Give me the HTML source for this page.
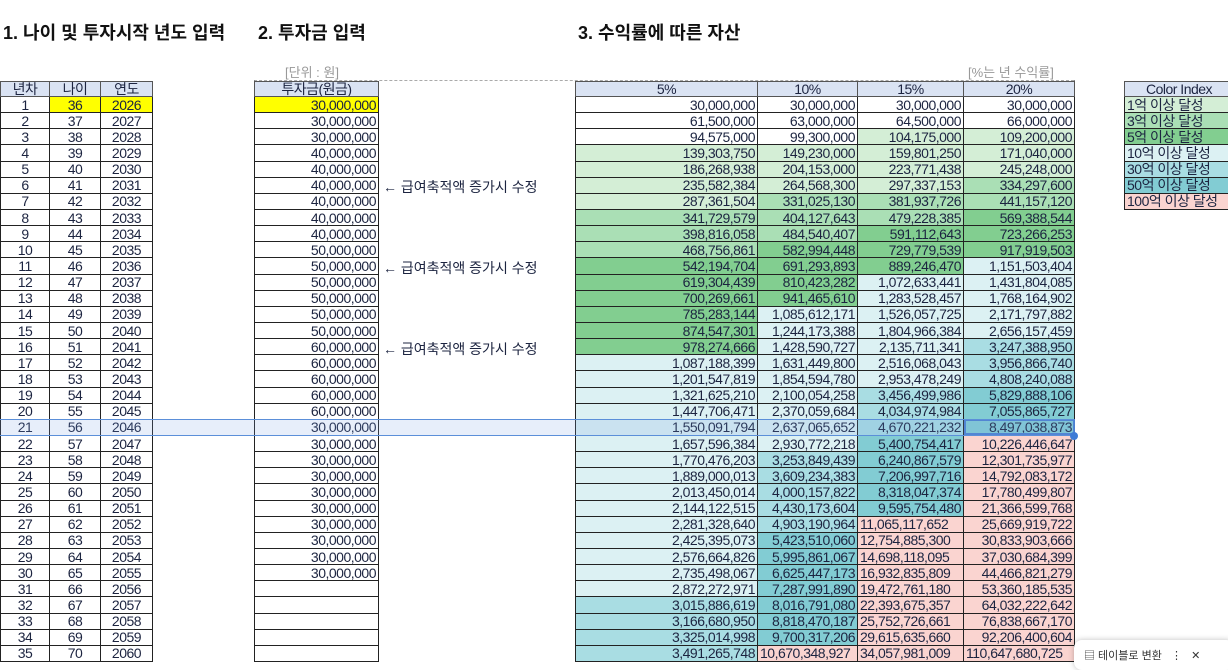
<!DOCTYPE html>
<html><head><meta charset="utf-8"><style>
*{margin:0;padding:0;box-sizing:border-box}
body{width:1228px;height:660px;overflow:hidden;background:#fff;font-family:"Liberation Sans","Noto Sans CJK KR",sans-serif;color:#1c2440;position:relative}
.t{position:absolute;font-weight:bold;font-size:18px;top:19px;color:#111;white-space:nowrap;overflow:hidden}
.u{position:absolute;top:62px;font-size:13px;color:#999}
table{position:absolute;border-collapse:collapse;table-layout:fixed;font-size:14px;letter-spacing:-0.5px}
td{border:1px solid #222;height:16.15px;line-height:14px;padding:0 2px;white-space:nowrap;overflow:hidden;text-align:right}
tr.h td{height:15px;background:#dae3f3;text-align:center;border-color:#555}
.c td{text-align:center}
.y{background:#ffff00}
.g1{background:#d4eed6}.g2{background:#aadfb5}.g3{background:#82ce90}
.c1{background:#dcf1f3}.c2{background:#a9dde3}.c3{background:#82ccd3}.p{background:#fad4d0}
.l{text-align:left}
.note{position:absolute;left:383px;font-size:14px;white-space:nowrap}
.sel{position:absolute;left:0;width:1074px;top:419px;height:17px;border-top:1px solid #5b8fd9;border-bottom:1px solid #5b8fd9;background:rgba(120,160,230,0.18)}
</style></head><body>
<div class="t" style="left:3px;width:252px">1. 나이 및 투자시작 년도 입력</div>
<div class="t" style="left:258px">2. 투자금 입력</div>
<div class="t" style="left:578px">3. 수익률에 따른 자산</div>
<div class="u" style="left:285px">[단위 : 원]</div>
<div class="u" style="left:968px">[%는 년 수익률]</div>
<div style="position:absolute;left:254px;top:80px;width:820px;border-top:1px dashed #aaa"></div>
<div style="position:absolute;left:254px;top:80px;height:580px;border-left:1px dashed #888"></div>
<div style="position:absolute;left:1074px;top:80px;height:580px;border-left:1px dashed #888"></div>

<table class="c" style="left:0;top:81px;width:152px"><colgroup><col style="width:49px"><col style="width:51px"><col style="width:52px"></colgroup>
<tr class="h"><td>년차</td><td>나이</td><td>연도</td></tr>
<tr><td>1</td><td class="y">36</td><td class="y">2026</td></tr>
<tr><td>2</td><td>37</td><td>2027</td></tr><tr><td>3</td><td>38</td><td>2028</td></tr><tr><td>4</td><td>39</td><td>2029</td></tr><tr><td>5</td><td>40</td><td>2030</td></tr><tr><td>6</td><td>41</td><td>2031</td></tr><tr><td>7</td><td>42</td><td>2032</td></tr><tr><td>8</td><td>43</td><td>2033</td></tr><tr><td>9</td><td>44</td><td>2034</td></tr><tr><td>10</td><td>45</td><td>2035</td></tr><tr><td>11</td><td>46</td><td>2036</td></tr><tr><td>12</td><td>47</td><td>2037</td></tr><tr><td>13</td><td>48</td><td>2038</td></tr><tr><td>14</td><td>49</td><td>2039</td></tr><tr><td>15</td><td>50</td><td>2040</td></tr><tr><td>16</td><td>51</td><td>2041</td></tr><tr><td>17</td><td>52</td><td>2042</td></tr><tr><td>18</td><td>53</td><td>2043</td></tr><tr><td>19</td><td>54</td><td>2044</td></tr><tr><td>20</td><td>55</td><td>2045</td></tr><tr><td>21</td><td>56</td><td>2046</td></tr><tr><td>22</td><td>57</td><td>2047</td></tr><tr><td>23</td><td>58</td><td>2048</td></tr><tr><td>24</td><td>59</td><td>2049</td></tr><tr><td>25</td><td>60</td><td>2050</td></tr><tr><td>26</td><td>61</td><td>2051</td></tr><tr><td>27</td><td>62</td><td>2052</td></tr><tr><td>28</td><td>63</td><td>2053</td></tr><tr><td>29</td><td>64</td><td>2054</td></tr><tr><td>30</td><td>65</td><td>2055</td></tr><tr><td>31</td><td>66</td><td>2056</td></tr><tr><td>32</td><td>67</td><td>2057</td></tr><tr><td>33</td><td>68</td><td>2058</td></tr><tr><td>34</td><td>69</td><td>2059</td></tr><tr><td>35</td><td>70</td><td>2060</td></tr>
</table>

<table style="left:254px;top:81px;width:125px">
<tr class="h"><td>투자금(원금)</td></tr>
<tr><td class="y">30,000,000</td></tr><tr><td>30,000,000</td></tr><tr><td>30,000,000</td></tr>
<tr><td>40,000,000</td></tr><tr><td>40,000,000</td></tr><tr><td>40,000,000</td></tr><tr><td>40,000,000</td></tr><tr><td>40,000,000</td></tr><tr><td>40,000,000</td></tr>
<tr><td>50,000,000</td></tr><tr><td>50,000,000</td></tr><tr><td>50,000,000</td></tr><tr><td>50,000,000</td></tr><tr><td>50,000,000</td></tr><tr><td>50,000,000</td></tr>
<tr><td>60,000,000</td></tr><tr><td>60,000,000</td></tr><tr><td>60,000,000</td></tr><tr><td>60,000,000</td></tr><tr><td>60,000,000</td></tr>
<tr><td>30,000,000</td></tr><tr><td>30,000,000</td></tr><tr><td>30,000,000</td></tr><tr><td>30,000,000</td></tr><tr><td>30,000,000</td></tr><tr><td>30,000,000</td></tr><tr><td>30,000,000</td></tr><tr><td>30,000,000</td></tr><tr><td>30,000,000</td></tr><tr><td>30,000,000</td></tr>
<tr><td>&nbsp;</td></tr><tr><td>&nbsp;</td></tr><tr><td>&nbsp;</td></tr><tr><td>&nbsp;</td></tr><tr><td>&nbsp;</td></tr>
</table>
<div class="note" style="top:177px">← 급여축적액 증가시 수정</div>
<div class="note" style="top:258px">← 급여축적액 증가시 수정</div>
<div class="note" style="top:339px">← 급여축적액 증가시 수정</div>

<table style="left:575px;top:81px;width:499px"><colgroup><col style="width:182px"><col style="width:100px"><col style="width:106px"><col style="width:111px"></colgroup>
<tr class="h"><td>5%</td><td>10%</td><td>15%</td><td>20%</td></tr>
<tr><td>30,000,000</td><td>30,000,000</td><td>30,000,000</td><td>30,000,000</td></tr>
<tr><td>61,500,000</td><td>63,000,000</td><td>64,500,000</td><td>66,000,000</td></tr>
<tr><td>94,575,000</td><td>99,300,000</td><td class="g1">104,175,000</td><td class="g1">109,200,000</td></tr>
<tr><td class="g1">139,303,750</td><td class="g1">149,230,000</td><td class="g1">159,801,250</td><td class="g1">171,040,000</td></tr>
<tr><td class="g1">186,268,938</td><td class="g1">204,153,000</td><td class="g1">223,771,438</td><td class="g1">245,248,000</td></tr>
<tr><td class="g1">235,582,384</td><td class="g1">264,568,300</td><td class="g1">297,337,153</td><td class="g2">334,297,600</td></tr>
<tr><td class="g1">287,361,504</td><td class="g2">331,025,130</td><td class="g2">381,937,726</td><td class="g2">441,157,120</td></tr>
<tr><td class="g2">341,729,579</td><td class="g2">404,127,643</td><td class="g2">479,228,385</td><td class="g3">569,388,544</td></tr>
<tr><td class="g2">398,816,058</td><td class="g2">484,540,407</td><td class="g3">591,112,643</td><td class="g3">723,266,253</td></tr>
<tr><td class="g2">468,756,861</td><td class="g3">582,994,448</td><td class="g3">729,779,539</td><td class="g3">917,919,503</td></tr>
<tr><td class="g3">542,194,704</td><td class="g3">691,293,893</td><td class="g3">889,246,470</td><td class="c1">1,151,503,404</td></tr>
<tr><td class="g3">619,304,439</td><td class="g3">810,423,282</td><td class="c1">1,072,633,441</td><td class="c1">1,431,804,085</td></tr>
<tr><td class="g3">700,269,661</td><td class="g3">941,465,610</td><td class="c1">1,283,528,457</td><td class="c1">1,768,164,902</td></tr>
<tr><td class="g3">785,283,144</td><td class="c1">1,085,612,171</td><td class="c1">1,526,057,725</td><td class="c1">2,171,797,882</td></tr>
<tr><td class="g3">874,547,301</td><td class="c1">1,244,173,388</td><td class="c1">1,804,966,384</td><td class="c1">2,656,157,459</td></tr>
<tr><td class="g3">978,274,666</td><td class="c1">1,428,590,727</td><td class="c1">2,135,711,341</td><td class="c2">3,247,388,950</td></tr>
<tr><td class="c1">1,087,188,399</td><td class="c1">1,631,449,800</td><td class="c1">2,516,068,043</td><td class="c2">3,956,866,740</td></tr>
<tr><td class="c1">1,201,547,819</td><td class="c1">1,854,594,780</td><td class="c1">2,953,478,249</td><td class="c2">4,808,240,088</td></tr>
<tr><td class="c1">1,321,625,210</td><td class="c1">2,100,054,258</td><td class="c2">3,456,499,986</td><td class="c3">5,829,888,106</td></tr>
<tr><td class="c1">1,447,706,471</td><td class="c1">2,370,059,684</td><td class="c2">4,034,974,984</td><td class="c3">7,055,865,727</td></tr>
<tr><td class="c1">1,550,091,794</td><td class="c1">2,637,065,652</td><td class="c2">4,670,221,232</td><td class="c3" style="outline:2px solid #4a7fd0;outline-offset:-2px">8,497,038,873</td></tr>
<tr><td class="c1">1,657,596,384</td><td class="c1">2,930,772,218</td><td class="c3">5,400,754,417</td><td class="p">10,226,446,647</td></tr>
<tr><td class="c1">1,770,476,203</td><td class="c2">3,253,849,439</td><td class="c3">6,240,867,579</td><td class="p">12,301,735,977</td></tr>
<tr><td class="c1">1,889,000,013</td><td class="c2">3,609,234,383</td><td class="c3">7,206,997,716</td><td class="p">14,792,083,172</td></tr>
<tr><td class="c1">2,013,450,014</td><td class="c2">4,000,157,822</td><td class="c3">8,318,047,374</td><td class="p">17,780,499,807</td></tr>
<tr><td class="c1">2,144,122,515</td><td class="c2">4,430,173,604</td><td class="c3">9,595,754,480</td><td class="p">21,366,599,768</td></tr>
<tr><td class="c1">2,281,328,640</td><td class="c2">4,903,190,964</td><td class="p l">11,065,117,652</td><td class="p">25,669,919,722</td></tr>
<tr><td class="c1">2,425,395,073</td><td class="c3">5,423,510,060</td><td class="p l">12,754,885,300</td><td class="p">30,833,903,666</td></tr>
<tr><td class="c1">2,576,664,826</td><td class="c3">5,995,861,067</td><td class="p l">14,698,118,095</td><td class="p">37,030,684,399</td></tr>
<tr><td class="c1">2,735,498,067</td><td class="c3">6,625,447,173</td><td class="p l">16,932,835,809</td><td class="p">44,466,821,279</td></tr>
<tr><td class="c1">2,872,272,971</td><td class="c3">7,287,991,890</td><td class="p l">19,472,761,180</td><td class="p">53,360,185,535</td></tr>
<tr><td class="c2">3,015,886,619</td><td class="c3">8,016,791,080</td><td class="p l">22,393,675,357</td><td class="p">64,032,222,642</td></tr>
<tr><td class="c2">3,166,680,950</td><td class="c3">8,818,470,187</td><td class="p l">25,752,726,661</td><td class="p">76,838,667,170</td></tr>
<tr><td class="c2">3,325,014,998</td><td class="c3">9,700,317,206</td><td class="p l">29,615,635,660</td><td class="p">92,206,400,604</td></tr>
<tr><td class="c2">3,491,265,748</td><td class="p l">10,670,348,927</td><td class="p l">34,057,981,009</td><td class="p l">110,647,680,725</td></tr>
</table>

<div class="sel"></div>
<div style="position:absolute;left:1070px;top:432px;width:8px;height:8px;border-radius:50%;background:#3d7bd6"></div>

<table style="left:1124px;top:81px;width:110px"><tr class="h"><td>Color Index</td></tr>
<tr><td class="g1 l">1억 이상 달성</td></tr><tr><td class="g2 l">3억 이상 달성</td></tr><tr><td class="g3 l">5억 이상 달성</td></tr>
<tr><td class="c1 l">10억 이상 달성</td></tr><tr><td class="c2 l">30억 이상 달성</td></tr><tr><td class="c3 l">50억 이상 달성</td></tr><tr><td class="p l">100억 이상 달성</td></tr></table>

<div style="position:absolute;left:1074px;top:640px;width:160px;height:30px;background:#fff;border-radius:8px;box-shadow:0 0 6px rgba(0,0,0,0.25);font-size:11px;color:#333;padding:7px 0 0 10px;white-space:nowrap">&#9636; 테이블로 변환 &nbsp;&nbsp;⋮ &nbsp;&nbsp;✕</div>
</body></html>
